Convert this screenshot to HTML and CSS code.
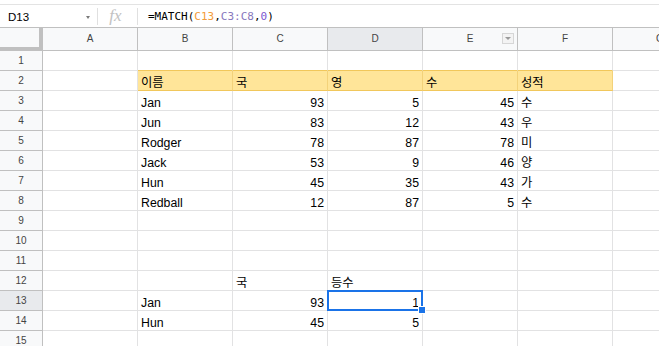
FILE: index.html
```html
<!DOCTYPE html>
<html lang="ko">
<head>
<meta charset="utf-8">
<link rel="stylesheet" href="styles.css">
</head>
<body>
<div class="top-gap"></div>
<div class="fbar">
  <div class="namebox"><span class="ref">D13</span><span class="caret"></span></div>
  <div class="sep"></div>
  <div class="fx">fx</div>
  <div class="sep"></div>
  <div class="formula">=MATCH(<span class="r1">C13</span>,<span class="r2">C3:C8</span>,<span class="num">0</span>)</div>
</div>
<div class="sheet">
  <div class="corner"></div>
  <div class="ch">A</div><div class="ch">B</div><div class="ch">C</div><div class="ch on">D</div>
  <div class="ch filt">E<span class="fbtn"><span class="ftri"></span></span></div><div class="ch">F</div><div class="ch">G</div>

  <div class="rh">1</div><div class="c"></div><div class="c gb"></div><div class="c gb"></div><div class="c gb"></div><div class="c gb"></div><div class="c gb"></div><div class="c"></div>
  <div class="rh">2</div><div class="c"></div><div class="c y">이름</div><div class="c y">국</div><div class="c y">영</div><div class="c y">수</div><div class="c y">성적</div><div class="c"></div>
  <div class="rh">3</div><div class="c"></div><div class="c">Jan</div><div class="c n">93</div><div class="c n">5</div><div class="c n">45</div><div class="c">수</div><div class="c"></div>
  <div class="rh">4</div><div class="c"></div><div class="c">Jun</div><div class="c n">83</div><div class="c n">12</div><div class="c n">43</div><div class="c">우</div><div class="c"></div>
  <div class="rh">5</div><div class="c"></div><div class="c">Rodger</div><div class="c n">78</div><div class="c n">87</div><div class="c n">78</div><div class="c">미</div><div class="c"></div>
  <div class="rh">6</div><div class="c"></div><div class="c">Jack</div><div class="c n">53</div><div class="c n">9</div><div class="c n">46</div><div class="c">양</div><div class="c"></div>
  <div class="rh">7</div><div class="c"></div><div class="c">Hun</div><div class="c n">45</div><div class="c n">35</div><div class="c n">43</div><div class="c">가</div><div class="c"></div>
  <div class="rh">8</div><div class="c"></div><div class="c">Redball</div><div class="c n">12</div><div class="c n">87</div><div class="c n">5</div><div class="c">수</div><div class="c"></div>
  <div class="rh">9</div><div class="c"></div><div class="c"></div><div class="c"></div><div class="c"></div><div class="c"></div><div class="c"></div><div class="c"></div>
  <div class="rh">10</div><div class="c"></div><div class="c"></div><div class="c"></div><div class="c"></div><div class="c"></div><div class="c"></div><div class="c"></div>
  <div class="rh">11</div><div class="c"></div><div class="c"></div><div class="c"></div><div class="c"></div><div class="c"></div><div class="c"></div><div class="c"></div>
  <div class="rh">12</div><div class="c"></div><div class="c"></div><div class="c">국</div><div class="c">등수</div><div class="c"></div><div class="c"></div><div class="c"></div>
  <div class="rh on">13</div><div class="c"></div><div class="c">Jan</div><div class="c n">93</div><div class="c n sel">1<span class="selbox"></span><span class="handle"></span></div><div class="c"></div><div class="c"></div><div class="c"></div>
  <div class="rh">14</div><div class="c"></div><div class="c">Hun</div><div class="c n">45</div><div class="c n">5</div><div class="c"></div><div class="c"></div><div class="c"></div>
  <div class="rh">15</div><div class="c"></div><div class="c"></div><div class="c"></div><div class="c"></div><div class="c"></div><div class="c"></div><div class="c"></div>
</div>
</body>
</html>
```
FILE: styles.css
```css
html, body {
  margin: 0;
  padding: 0;
  background: #ffffff;
  overflow: hidden;
  width: 659px;
  height: 346px;
}
body {
  font-family: "Liberation Sans", "Noto Sans CJK KR", sans-serif;
  color: #000;
}
.top-gap {
  height: 4px;
}
.fbar {
  display: flex;
  align-items: center;
  height: 24px;
  box-sizing: border-box;
  border-top: 1px solid #e3e3e3;
  border-bottom: 1px solid #c0c0c0;
}
.namebox {
  width: 97px;
  display: flex;
  align-items: center;
  padding-left: 8px;
  box-sizing: border-box;
  font-size: 11.5px;
  padding-top: 2px;
}
.caret {
  margin-left: auto;
  margin-right: 7px;
  width: 0;
  height: 0;
  border-left: 2.5px solid transparent;
  border-right: 2.5px solid transparent;
  border-top: 3px solid #7a7a7a;
}
.sep {
  width: 1px;
  height: 17px;
  background: #e0e0e0;
}
.fx {
  width: 39px;
  text-align: center;
  font-family: "Liberation Serif", serif;
  font-style: italic;
  font-size: 17px;
  color: #c2c2c2;
  line-height: 20px;
  padding-right: 4px;
  box-sizing: border-box;
}
.formula {
  padding-left: 10px;
  font-family: "DejaVu Sans Mono", monospace;
  font-size: 11px;
  padding-top: 1px;
}
.r1 { color: #f39c3c; }
.r2 { color: #8878bd; }
.num { color: #7a55cf; }

.sheet {
  display: grid;
  grid-template-columns: 43px repeat(7, 95px);
  grid-template-rows: 23px;
  grid-auto-rows: 20px;
}
.corner {
  background: #f8f9fa;
  border-right: 4px solid #c0c0c0;
  border-bottom: 4px solid #c0c0c0;
}
.ch {
  position: relative;
  background: #f8f9fa;
  border-right: 1px solid #c0c0c0;
  border-bottom: 1px solid #c0c0c0;
  text-align: center;
  font-size: 10px;
  line-height: 22px;
  color: #444;
}
.ch.on, .rh.on {
  background: #e8eaed;
}
.fbtn {
  position: absolute;
  right: 3px;
  top: 5px;
  width: 12px;
  height: 11px;
  box-sizing: border-box;
  border: 1px solid #d6d6d6;
  background: #f3f3f3;
  display: flex;
  align-items: center;
  justify-content: center;
}
.ftri {
  width: 0;
  height: 0;
  border-left: 3px solid transparent;
  border-right: 3px solid transparent;
  border-top: 3px solid #9a9a9a;
}
.rh {
  background: #f8f9fa;
  border-right: 1px solid #c0c0c0;
  border-bottom: 1px solid #c0c0c0;
  text-align: center;
  font-size: 10px;
  line-height: 19px;
  color: #444;
}
.c {
  position: relative;
  box-sizing: border-box;
  border-right: 1px solid #e2e2e3;
  border-bottom: 1px solid #e2e2e3;
  padding: 5px 3px 0;
  font-size: 12.3px;
  line-height: 14px;
  white-space: nowrap;
}
.n {
  text-align: right;
}
.gb {
  border-bottom-color: #f1c75b;
}
.y {
  background: #ffe599;
  border-right-color: #f3d27a;
  border-bottom-color: #f1c75b;
}
.sel {
  z-index: 5;
}
.selbox {
  position: absolute;
  left: -1px;
  top: -1px;
  right: -1px;
  bottom: -1px;
  border: 2px solid #1a73e8;
}
.handle {
  position: absolute;
  left: 90px;
  top: 15px;
  width: 8px;
  height: 8px;
  box-sizing: border-box;
  background: #1a73e8;
  border: 1px solid #ffffff;
}
```
